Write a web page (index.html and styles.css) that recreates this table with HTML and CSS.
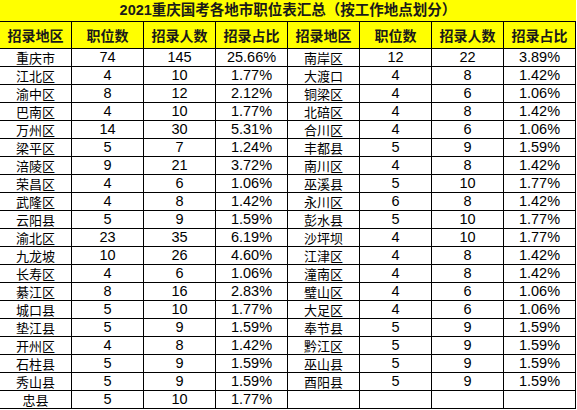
FILE: index.html
```html
<!DOCTYPE html>
<html lang="zh">
<head>
<meta charset="utf-8">
<title>2021重庆国考各地市职位表汇总</title>
<link rel="stylesheet" href="styles.css">
</head>
<body>
<div class="sheet">
  <div class="title">2021重庆国考各地市职位表汇总（按工作地点划分）</div>
  <div class="grid" id="grid">
    <div class="hd">招录地区</div><div class="hd">职位数</div><div class="hd">招录人数</div><div class="hd">招录占比</div>
    <div class="hd">招录地区</div><div class="hd">职位数</div><div class="hd">招录人数</div><div class="hd">招录占比</div>

    <div class="c t">重庆市</div><div class="c n">74</div><div class="c n">145</div><div class="c n">25.66%</div>
    <div class="c t">南岸区</div><div class="c n">12</div><div class="c n">22</div><div class="c n">3.89%</div>

    <div class="c t">江北区</div><div class="c n">4</div><div class="c n">10</div><div class="c n">1.77%</div>
    <div class="c t">大渡口</div><div class="c n">4</div><div class="c n">8</div><div class="c n">1.42%</div>

    <div class="c t">渝中区</div><div class="c n">8</div><div class="c n">12</div><div class="c n">2.12%</div>
    <div class="c t">铜梁区</div><div class="c n">4</div><div class="c n">6</div><div class="c n">1.06%</div>

    <div class="c t">巴南区</div><div class="c n">4</div><div class="c n">10</div><div class="c n">1.77%</div>
    <div class="c t">北碚区</div><div class="c n">4</div><div class="c n">8</div><div class="c n">1.42%</div>

    <div class="c t">万州区</div><div class="c n">14</div><div class="c n">30</div><div class="c n">5.31%</div>
    <div class="c t">合川区</div><div class="c n">4</div><div class="c n">6</div><div class="c n">1.06%</div>

    <div class="c t">梁平区</div><div class="c n">5</div><div class="c n">7</div><div class="c n">1.24%</div>
    <div class="c t">丰都县</div><div class="c n">5</div><div class="c n">9</div><div class="c n">1.59%</div>

    <div class="c t">涪陵区</div><div class="c n">9</div><div class="c n">21</div><div class="c n">3.72%</div>
    <div class="c t">南川区</div><div class="c n">4</div><div class="c n">8</div><div class="c n">1.42%</div>

    <div class="c t">荣昌区</div><div class="c n">4</div><div class="c n">6</div><div class="c n">1.06%</div>
    <div class="c t">巫溪县</div><div class="c n">5</div><div class="c n">10</div><div class="c n">1.77%</div>

    <div class="c t">武隆区</div><div class="c n">4</div><div class="c n">8</div><div class="c n">1.42%</div>
    <div class="c t">永川区</div><div class="c n">6</div><div class="c n">8</div><div class="c n">1.42%</div>

    <div class="c t">云阳县</div><div class="c n">5</div><div class="c n">9</div><div class="c n">1.59%</div>
    <div class="c t">彭水县</div><div class="c n">5</div><div class="c n">10</div><div class="c n">1.77%</div>

    <div class="c t">渝北区</div><div class="c n">23</div><div class="c n">35</div><div class="c n">6.19%</div>
    <div class="c t">沙坪坝</div><div class="c n">4</div><div class="c n">10</div><div class="c n">1.77%</div>

    <div class="c t">九龙坡</div><div class="c n">10</div><div class="c n">26</div><div class="c n">4.60%</div>
    <div class="c t">江津区</div><div class="c n">4</div><div class="c n">8</div><div class="c n">1.42%</div>

    <div class="c t">长寿区</div><div class="c n">4</div><div class="c n">6</div><div class="c n">1.06%</div>
    <div class="c t">潼南区</div><div class="c n">4</div><div class="c n">8</div><div class="c n">1.42%</div>

    <div class="c t">綦江区</div><div class="c n">8</div><div class="c n">16</div><div class="c n">2.83%</div>
    <div class="c t">璧山区</div><div class="c n">4</div><div class="c n">6</div><div class="c n">1.06%</div>

    <div class="c t">城口县</div><div class="c n">5</div><div class="c n">10</div><div class="c n">1.77%</div>
    <div class="c t">大足区</div><div class="c n">4</div><div class="c n">6</div><div class="c n">1.06%</div>

    <div class="c t">垫江县</div><div class="c n">5</div><div class="c n">9</div><div class="c n">1.59%</div>
    <div class="c t">奉节县</div><div class="c n">5</div><div class="c n">9</div><div class="c n">1.59%</div>

    <div class="c t">开州区</div><div class="c n">4</div><div class="c n">8</div><div class="c n">1.42%</div>
    <div class="c t">黔江区</div><div class="c n">5</div><div class="c n">9</div><div class="c n">1.59%</div>

    <div class="c t">石柱县</div><div class="c n">5</div><div class="c n">9</div><div class="c n">1.59%</div>
    <div class="c t">巫山县</div><div class="c n">5</div><div class="c n">9</div><div class="c n">1.59%</div>

    <div class="c t">秀山县</div><div class="c n">5</div><div class="c n">9</div><div class="c n">1.59%</div>
    <div class="c t">酉阳县</div><div class="c n">5</div><div class="c n">9</div><div class="c n">1.59%</div>

    <div class="c t">忠县</div><div class="c n">5</div><div class="c n">10</div><div class="c n">1.77%</div>
    <div class="c t"></div><div class="c n"></div><div class="c n"></div><div class="c n"></div>
  </div>
</div>
</body>
</html>
```

FILE: styles.css
```css
html, body {
  margin: 0;
  padding: 0;
  background: #ffffff;
}

.sheet {
  width: 576px;
  font-family: "Liberation Sans", "Noto Sans CJK SC", sans-serif;
  color: #000;
}

.title {
  height: 22px;
  box-sizing: border-box;
  border-bottom: 1px solid #000;
  background: #ffff00;
  font-family: "Liberation Sans", "Noto Sans CJK SC", sans-serif;
  font-weight: bold;
  font-size: 14.5px;
  line-height: 21px;
  text-align: center;
  color: #1a1a1a;
}

.grid {
  display: grid;
  grid-template-columns: repeat(8, 72px);
  grid-auto-rows: 18px;
}

.grid > div {
  box-sizing: border-box;
  border-right: 1px solid #000;
  border-bottom: 1px solid #000;
  text-align: center;
  white-space: nowrap;
  overflow: hidden;
}

.hd {
  height: 27px;
  background: #ffff00;
  font-family: "Noto Sans CJK SC", sans-serif;
  font-weight: bold;
  font-size: 14px;
  line-height: 26px;
  color: #1a1a1a;
}

.grid > .hd {
  grid-row: 1;
}

.grid {
  grid-template-rows: 27px;
}

.t {
  font-family: "Noto Sans CJK SC", sans-serif;
  font-size: 13px;
  line-height: 17px;
}

.n {
  font-family: "Liberation Sans", sans-serif;
  font-size: 14.5px;
  line-height: 17px;
}
```
